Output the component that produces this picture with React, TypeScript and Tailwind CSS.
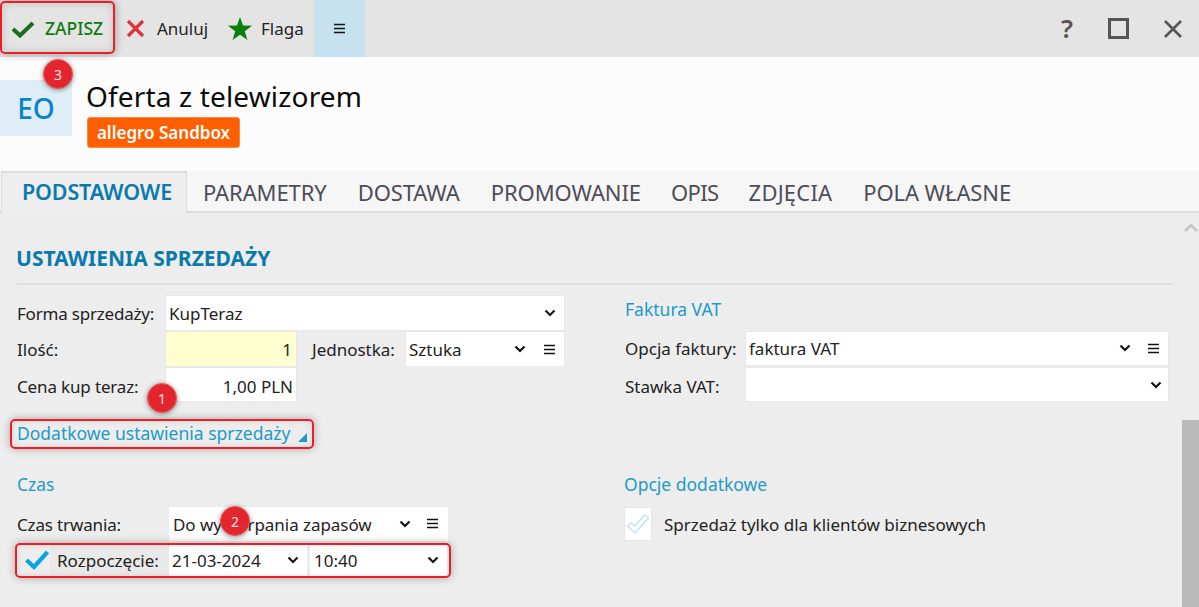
import React from "react";

const font = { fontFamily: '"Noto Sans", sans-serif' };

function Chevron({ className = "" }: { className?: string }) {
  return (
    <svg width="12" height="8" viewBox="0 0 12 8" className={className}>
      <path d="M1.5 1.5 L6 6 L10.5 1.5" fill="none" stroke="#111" strokeWidth="2.2" />
    </svg>
  );
}

function Burger() {
  return (
    <svg width="11" height="11" viewBox="0 0 11 11">
      <path d="M0 1.5h11M0 5.5h11M0 9.5h11" stroke="#111" strokeWidth="1.3" />
    </svg>
  );
}

function Badge({ n, className }: { n: number; className: string }) {
  return (
    <div
      className={`absolute w-[30px] h-[30px] rounded-full bg-[#e3262e] border border-[#f0565c] text-[#f7e4e4] text-[14px] flex items-center justify-center shadow-[0_1px_5px_rgba(0,0,0,0.45)] ${className}`}
    >
      {n}
    </div>
  );
}

function Label({ children, className = "" }: { children: React.ReactNode; className?: string }) {
  return <span className={`text-[17px] leading-[24px] text-[#222] whitespace-nowrap ${className}`}>{children}</span>;
}

function Section({ children }: { children: React.ReactNode }) {
  return <span className="text-[17.5px] leading-[24px] text-[#1e9ac9] whitespace-nowrap">{children}</span>;
}

export default function App() {
  return (
    <div style={font} className="relative w-[1199px] h-[607px] overflow-hidden bg-[#ededed] flex flex-col">
      {/* toolbar */}
      <div className="h-[57px] shrink-0 bg-[#e4e4e4] flex items-stretch pl-[2px]">
        <div className="w-[113px] flex items-center pl-[9px] gap-[10px]">
          <svg width="24" height="18" viewBox="0 0 24 18">
            <path d="M2 9 L9 15.5 L22 3" fill="none" stroke="#1d6b1d" strokeWidth="4" />
          </svg>
          <span className="text-[17.5px] font-medium text-[#0e7c0e]">ZAPISZ</span>
        </div>
        <div className="w-[100px] flex items-center pl-[11px] gap-[12px]">
          <svg width="19" height="19" viewBox="0 0 19 19">
            <path d="M2 2 L17 17 M17 2 L2 17" stroke="#e0323c" strokeWidth="3.2" />
          </svg>
          <Label className="text-[#1a1a1a]">Anuluj</Label>
        </div>
        <div className="w-[99px] flex items-center pl-[13px] gap-[9px]">
          <svg width="24" height="23" viewBox="0 0 24 23">
            <path d="M12 0 L15 8.5 L24 8.7 L16.8 14.2 L19.4 23 L12 17.8 L4.6 23 L7.2 14.2 L0 8.7 L9 8.5 Z" fill="#0a7d0a" />
          </svg>
          <Label className="text-[#1a1a1a]">Flaga</Label>
        </div>
        <div className="w-[51px] bg-[#c6e2f1] flex items-center justify-center">
          <Burger />
        </div>
        <div className="ml-auto flex items-center pr-[16px]">
          <span className="w-[24px] text-center text-[26px] font-semibold text-[#555] mr-[29px]">?</span>
          <div className="w-[21px] h-[21px] border-[3px] border-[#555] mr-[34px]" />
          <svg width="20" height="20" viewBox="0 0 20 20">
            <path d="M2 2 L18 18 M18 2 L2 18" stroke="#555" strokeWidth="2.6" />
          </svg>
        </div>
      </div>

      {/* header */}
      <div className="h-[114px] shrink-0 bg-[#fcfcfc] pt-[23px] flex items-start">
        <div className="w-[72px] h-[56px] bg-[#dfedf6] flex items-center justify-center text-[28px] font-medium text-[#0a84c9]">
          EO
        </div>
        <div className="ml-[15px] flex flex-col">
          <div className="text-[28px] leading-[34px] -mt-[1px] tracking-[0.15px] text-[#0a0a0a] -ml-[1px]">Oferta z telewizorem</div>
          <div className="mt-[4px] w-[153px] h-[31px] rounded-[3px] bg-[#ff5f00] border border-[#f58a45] flex items-center justify-center text-white text-[17px] font-semibold">
            allegro Sandbox
          </div>
        </div>
      </div>

      {/* tabs */}
      <div className="h-[42px] shrink-0 bg-[#f6f6f6] border-b-2 border-[#dcdcdc] flex items-stretch pl-[1px] text-[22px] tracking-[-0.1px] text-[#4d4d57]">
        <div className="w-[186px] h-[42px] bg-[#eeeeee] border-t-2 border-x border-[#dcdcdc] flex items-center justify-center pb-[1px] pl-[6px] font-semibold text-[21.5px] tracking-[-0.15px] text-[#0a7aad]">
          PODSTAWOWE
        </div>
        <div className="flex items-center pl-[16px] pt-[2px]">
          <span className="mr-[31px]">PARAMETRY</span>
          <span className="mr-[31px]">DOSTAWA</span>
          <span className="mr-[30px]">PROMOWANIE</span>
          <span className="mr-[30px] tracking-[-0.6px]">OPIS</span>
          <span className="mr-[31px] tracking-[0.2px]">ZDJĘCIA</span>
          <span>POLA WŁASNE</span>
        </div>
      </div>

      {/* body */}
      <div className="flex-1 flex min-h-0">
        <div className="flex-1 pl-[17px] pr-[10px] flex flex-col">
          <div className="h-[72px] border-b-2 border-[#dfdfdf] flex items-center pt-[21px]">
            <span className="text-[21px] font-bold text-[#0a7aad] -ml-[1px]">USTAWIENIA SPRZEDAŻY</span>
          </div>

          <div className="flex mt-[9px] h-[108px]">
            {/* left */}
            <div className="w-[608px] flex flex-col">
              <div className="h-[37px] flex items-center">
                <Label className="w-[148px] pt-[2px] tracking-[-0.2px]">Forma sprzedaży:</Label>
                <div className="w-[400px] h-[36px] bg-white border border-[#e8e8e8] flex items-center justify-between pl-[3px] pr-[8px]">
                  <Label className="pt-[2px]">KupTeraz</Label>
                  <Chevron />
                </div>
              </div>
              <div className="h-[36px] flex items-center">
                <Label className="w-[148px] pt-[2px]">Ilość:</Label>
                <div className="w-[132px] h-[36px] bg-[#ffffcf] border border-[#e8e8e8] flex items-center justify-end pr-[4px]">
                  <Label className="pt-[2px]">1</Label>
                </div>
                <Label className="ml-[15px] w-[93px] pt-[2px]">Jednostka:</Label>
                <div className="w-[160px] h-[36px] bg-white border border-[#e8e8e8] flex items-center pl-[3px]">
                  <Label className="flex-1 pt-[2px]">Sztuka</Label>
                  <Chevron className="mr-[18px]" />
                  <div className="mr-[9px]"><Burger /></div>
                </div>
              </div>
              <div className="h-[35px] flex items-center">
                <Label className="w-[148px] pt-[4px] tracking-[-0.15px]">Cena kup teraz:</Label>
                <div className="w-[132px] h-[35px] bg-white border border-[#e8e8e8] flex items-center justify-end pr-[3px]">
                  <Label className="pt-[4px]">1,00 PLN</Label>
                </div>
              </div>
            </div>
            {/* right */}
            <div className="w-[544px] flex flex-col">
              <div className="h-[37px] flex items-center -mt-[2px] pb-[3px]">
                <Section>Faktura VAT</Section>
              </div>
              <div className="h-[38px] flex items-center">
                <Label className="w-[120px] pt-[2px]">Opcja faktury:</Label>
                <div className="w-[424px] h-[35px] bg-white border border-[#e8e8e8] flex items-center pl-[3px]">
                  <Label className="flex-1 pt-[2px]">faktura VAT</Label>
                  <Chevron className="mr-[17px]" />
                  <div className="mr-[9px]"><Burger /></div>
                </div>
              </div>
              <div className="h-[35px] flex items-center">
                <Label className="w-[120px] pt-[4px]">Stawka VAT:</Label>
                <div className="w-[424px] h-[35px] bg-white border border-[#e8e8e8] flex items-center justify-end pr-[6px]">
                  <Chevron />
                </div>
              </div>
            </div>
          </div>

          <div className="h-[46px] flex items-center pt-[16px]">
            <Section>Dodatkowe ustawienia sprzedaży</Section>
            <svg width="9" height="9" viewBox="0 0 9 9" className="ml-[8px] mt-[8px]">
              <path d="M9 0 V9 H0 Z" fill="#1e9ac9" />
            </svg>
          </div>

          <div className="flex mt-[18px]">
            <div className="w-[607px] flex flex-col">
              <div className="h-[40px] flex items-center pb-[4px]">
                <Section>Czas</Section>
              </div>
              <div className="h-[35px] flex items-center">
                <Label className="w-[152px] pt-[2px] tracking-[-0.15px]">Czas trwania:</Label>
                <div className="w-[279px] h-[34px] bg-white flex items-center pl-[4px]">
                  <Label className="flex-1 pt-[2px] tracking-[-0.05px]">Do wyczerpania zapasów</Label>
                  <Chevron className="mr-[16px]" />
                  <div className="mr-[10px]"><Burger /></div>
                </div>
              </div>
              <div className="h-[36px] flex items-center pl-[6px] pt-[2px]">
                <div className="w-[27px] h-[33px] flex items-center justify-center">
                  <svg width="24" height="20" viewBox="0 0 24 20">
                    <path d="M1.5 10 L9 17 L22.5 2" fill="none" stroke="#0aa5e0" strokeWidth="4.2" />
                  </svg>
                </div>
                <div className="w-[119px] h-[33px] bg-[#e9e9e9] flex items-center pl-[7px]">
                  <Label className="pt-[2px]">Rozpoczęcie:</Label>
                </div>
                <div className="w-[138px] h-[33px] bg-white flex items-center justify-between pl-[3px] pr-[8px]">
                  <Label className="pt-[2px]">21-03-2024</Label>
                  <Chevron />
                </div>
                <div className="w-[137px] ml-[3px] h-[33px] bg-white flex items-center justify-between pl-[4px] pr-[8px]">
                  <Label className="pt-[2px]">10:40</Label>
                  <Chevron />
                </div>
              </div>
            </div>
            <div className="flex flex-col">
              <div className="h-[40px] flex items-center pb-[4px]">
                <Section>Opcje dodatkowe</Section>
              </div>
              <div className="h-[35px] flex items-center">
                <div className="w-[28px] h-[34px] bg-white border border-[#e6e6e6] flex items-center justify-center">
                  <svg width="24" height="22" viewBox="0 0 24 22">
                    <path d="M1.5 13 L9 20 L22.5 5 L18.5 2 L9 13 L5 10 Z" fill="none" stroke="#bde6f5" strokeWidth="1.5" />
                  </svg>
                </div>
                <Label className="ml-[12px] pt-[2px]">Sprzedaż tylko dla klientów biznesowych</Label>
              </div>
            </div>
          </div>
        </div>

        {/* scrollbar */}
        <div className="w-[17px] shrink-0 flex flex-col items-center">
          <svg width="14" height="10" viewBox="0 0 14 10" className="mt-[9px]">
            <path d="M1 9 L7 3 L13 9" fill="none" stroke="#c4c4c4" strokeWidth="2.5" />
          </svg>
          <div className="mt-[188px] flex-1 w-full bg-[#b9b9b9]" />
        </div>
      </div>

      {/* annotations */}
      <div className="absolute left-0 top-[1px] w-[115px] h-[53px] rounded-[5px] border-2 border-[#ee1c25] shadow-[0_0_8px_rgba(0,0,0,0.35),inset_0_0_8px_rgba(0,0,0,0.15)]" />
      <div className="absolute left-[10px] top-[419px] w-[304px] h-[30px] rounded-[5px] border-2 border-[#ee1c25] shadow-[0_0_8px_rgba(0,0,0,0.3),inset_0_0_6px_rgba(0,0,0,0.1)]" />
      <div className="absolute left-[15px] top-[543px] w-[436px] h-[35px] rounded-[5px] border-2 border-[#ee1c25] shadow-[0_0_8px_rgba(0,0,0,0.3),inset_0_0_6px_rgba(0,0,0,0.1)]" />
      <Badge n={3} className="left-[43px] top-[59px]" />
      <Badge n={1} className="left-[147px] top-[383px]" />
      <Badge n={2} className="left-[220px] top-[506px]" />
    </div>
  );
}
